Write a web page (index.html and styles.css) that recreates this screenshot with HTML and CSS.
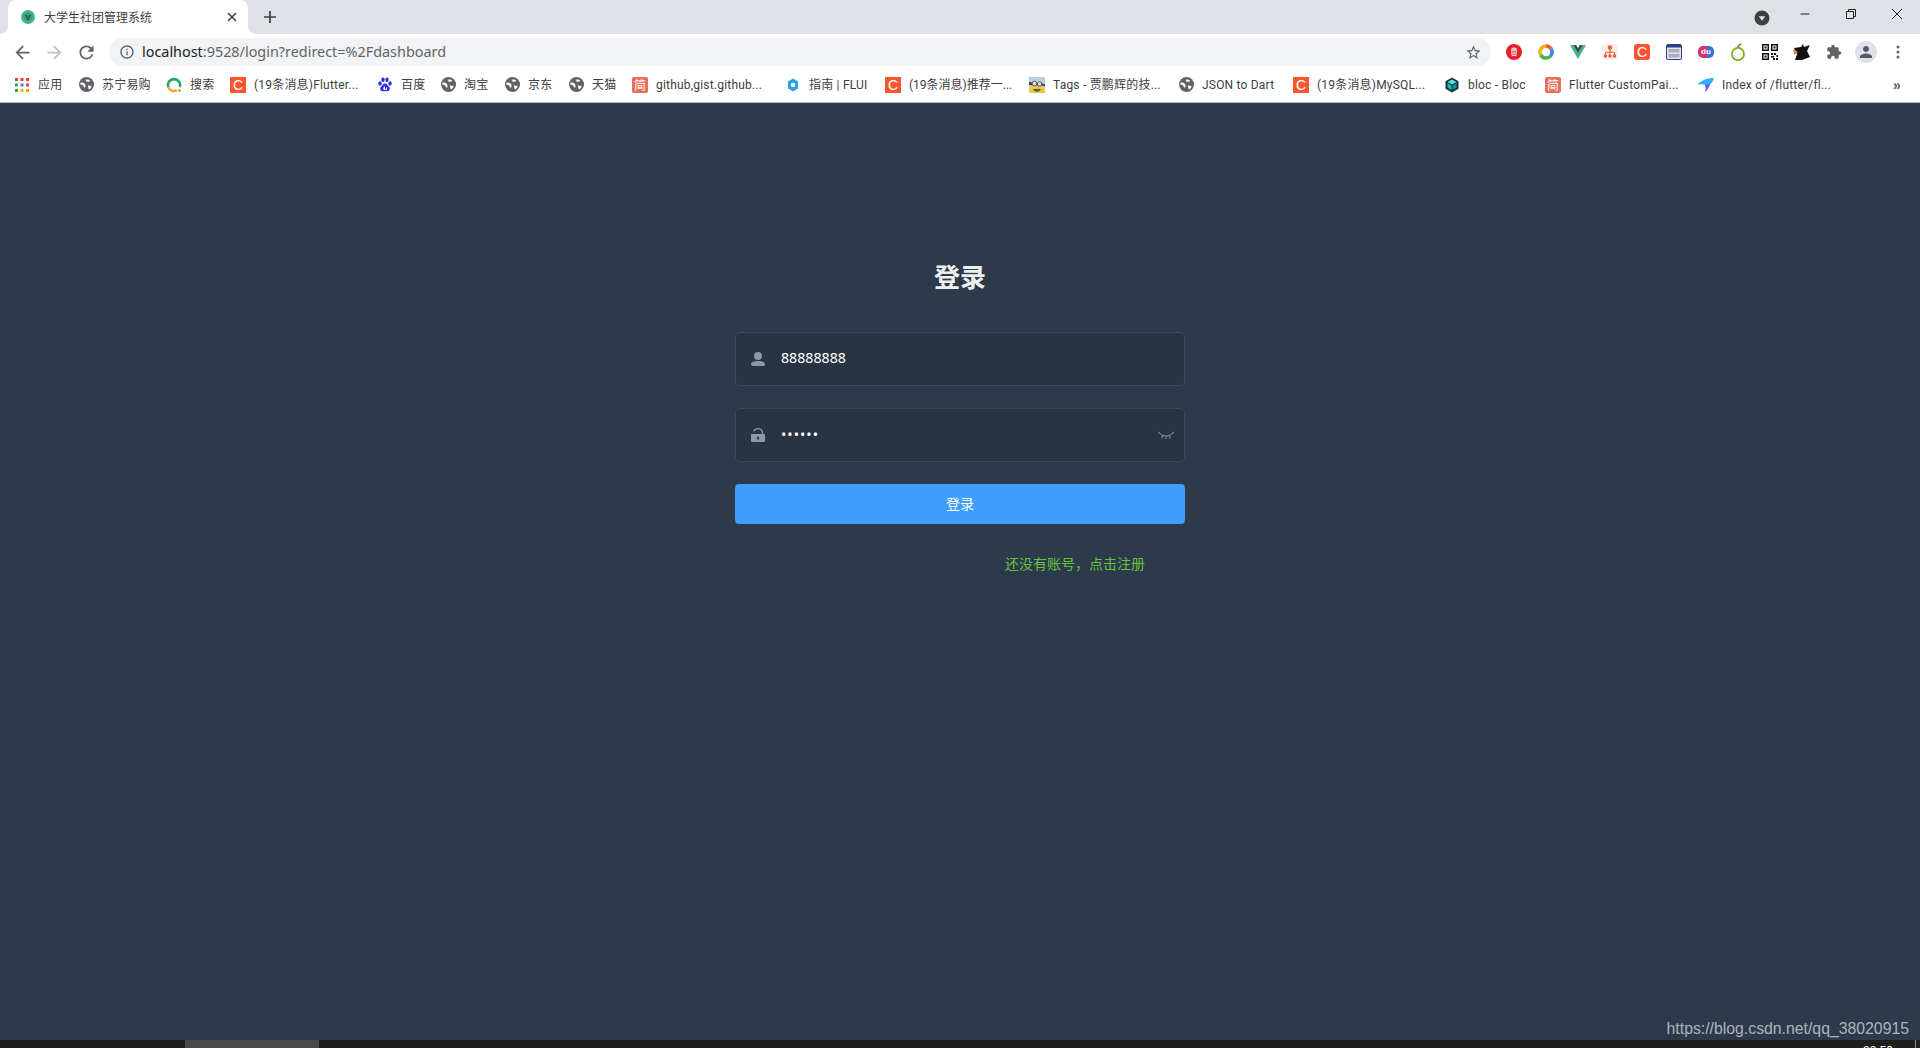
FILE: index.html
```html
<!DOCTYPE html>
<html lang="zh-CN">
<head>
<meta charset="utf-8">
<title>大学生社团管理系统</title>
<link rel="stylesheet" href="styles.css">
</head>
<body>
<svg class="defs" width="0" height="0" aria-hidden="true">
  <symbol id="globe" viewBox="0 0 16 16"><circle cx="8" cy="8" r="8" fill="#5f6368"/><path fill="#fff" d="M1.800 6.200c1.700-.6 3.300.1 4.400 1.300.8.900 1 2 .5 3.100-.3.700-.9 1-1.300.6-.5-.6-.4-1.500-1-2.100-.9-.8-2.200-.9-3-1.100-.2-.7 0-1.300.4-1.800zM7.500 2.700c1.600-.3 3.200.1 4.300 1-.2 1-1.200 1.500-2.200 1.500-1.100 0-2-.5-2.400-1.400-.1-.4 0-.8.300-1.100zM9.500 9.300c1.400-.5 3 0 4 .8-.5 1.600-1.700 2.600-3 3.100-.5-1-.9-2.500-1-3.900z"/></symbol>
</svg>

<header class="tabstrip">
  <div class="tab">
    <svg class="favicon" width="16" height="16" viewBox="0 0 16 16"><circle cx="8" cy="8" r="7" fill="#42b98a"/><circle cx="8" cy="8" r="4.600" fill="#3f9c83"/><text x="8" y="11" text-anchor="middle" class="favicon-v">V</text></svg>
    <span class="tab-title">大学生社团管理系统</span>
    <svg class="tab-close" width="16" height="16" viewBox="0 0 16 16"><path d="M4 4l8 8M12 4l-8 8" stroke="#3c4043" stroke-width="1.600" fill="none"/></svg>
  </div>
  <div class="newtab"><svg width="14" height="14" viewBox="0 0 14 14"><path d="M7 1v12M1 7h12" stroke="#3c4043" stroke-width="1.700" fill="none"/></svg></div>
  <div class="strip-space"></div>
  <div class="tabsearch"><svg width="16" height="16" viewBox="0 0 16 16"><circle cx="8" cy="8" r="7.500" fill="#3c4043"/><path d="M4.600 6.200h6.800L8 10.800z" fill="#dee1e6"/></svg></div>
  <div class="winbtn"><svg width="12" height="12" viewBox="0 0 12 12"><path d="M1.500 6h9" stroke="#202124" stroke-width="1" fill="none"/></svg></div>
  <div class="winbtn"><svg width="12" height="12" viewBox="0 0 12 12"><path d="M1.500 3.500h7v7h-7zM3.500 3.500v-2h7v7h-2" stroke="#202124" stroke-width="1" fill="none"/></svg></div>
  <div class="winbtn"><svg width="12" height="12" viewBox="0 0 12 12"><path d="M1 1l10 10M11 1L1 11" stroke="#202124" stroke-width="1" fill="none"/></svg></div>
</header>

<nav class="toolbar">
  <div class="navbtn"><svg width="21" height="21" viewBox="0 0 24 24" fill="#5f6368"><path d="M20 11H7.830l5.590-5.590L12 4l-8 8 8 8 1.410-1.410L7.830 13H20v-2z"/></svg></div>
  <div class="navbtn"><svg class="mirror" width="21" height="21" viewBox="0 0 24 24" fill="#bdc1c6"><path d="M20 11H7.830l5.590-5.590L12 4l-8 8 8 8 1.410-1.410L7.830 13H20v-2z"/></svg></div>
  <div class="navbtn"><svg width="21" height="21" viewBox="0 0 24 24" fill="#5f6368"><path d="M17.650 6.350A7.958 7.958 0 0 0 12 4c-4.420 0-7.990 3.580-7.990 8s3.570 8 7.990 8c3.730 0 6.840-2.550 7.730-6h-2.080A5.990 5.990 0 0 1 12 18c-3.310 0-6-2.690-6-6s2.690-6 6-6c1.660 0 3.140.69 4.220 1.780L13 11h7V4l-2.350 2.350z"/></svg></div>
  <div class="omnibox">
    <svg class="info" width="16" height="16" viewBox="0 0 24 24" fill="#5f6368"><path d="M11 7h2v2h-2zm0 4h2v6h-2zm1-9C6.480 2 2 6.480 2 12s4.480 10 10 10 10-4.480 10-10S17.520 2 12 2zm0 18c-4.410 0-8-3.590-8-8s3.590-8 8-8 8 3.590 8 8-3.590 8-8 8z"/></svg>
    <span class="url"><span class="url-host">localhost</span>:9528/login?redirect=%2Fdashboard</span>
    <svg class="star" width="17" height="17" viewBox="0 0 24 24" fill="#5f6368"><path d="M22 9.240l-7.190-.62L12 2 9.190 8.630 2 9.240l5.460 4.730L5.820 21 12 17.270 18.180 21l-1.630-7.030L22 9.240zM12 15.400l-3.760 2.270 1-4.280-3.320-2.880 4.380-.38L12 6.100l1.710 4.040 4.380.38-3.320 2.880 1 4.280L12 15.400z"/></svg>
  </div>
  <div class="extensions">
    <div class="ext"><svg width="16" height="16" viewBox="0 0 16 16"><circle cx="8" cy="8" r="8" fill="#e5202b"/><path d="M5 5.200h6M6.800 5V4h2.400v1M5.700 6.200h4.600l-.4 5.400H6.100zM7.200 7.500v3M8.800 7.500v3" stroke="#fff" stroke-width=".9" fill="none"/></svg></div>
    <div class="ext"><svg width="16" height="16" viewBox="0 0 16 16" fill="none" stroke-width="3.600"><path d="M2.800 11A6 6 0 0 1 8 2" stroke="#f5b428"/><path d="M8 2a6 6 0 0 1 5.200 3" stroke="#ea5a3a"/><path d="M13.200 5a6 6 0 0 1-.9 7.200" stroke="#4285f4"/><path d="M12.300 12.200A6 6 0 0 1 2.800 11" stroke="#4caf50"/></svg></div>
    <div class="ext"><svg width="16" height="14" viewBox="0 0 16 14"><path d="M0 0h3.200L8 8.200 12.800 0H16L8 14z" fill="#41b883"/><path d="M3.200 0h3L8 3.200 9.800 0h3L8 8.200z" fill="#35495e"/></svg></div>
    <div class="ext"><svg width="16" height="16" viewBox="0 0 16 16"><rect width="16" height="16" rx="2" fill="#f6efec"/><path d="M8 5v3M3.500 11V8.300h9V11M8 8v3" stroke="#ef5b33" stroke-width="1" fill="none"/><circle cx="8" cy="3.500" r="2.200" fill="#ef5b33"/><circle cx="3.500" cy="12" r="1.700" fill="#ef5b33"/><circle cx="8" cy="12" r="1.700" fill="#ef5b33"/><circle cx="12.500" cy="12" r="1.700" fill="#ef5b33"/></svg></div>
    <div class="ext"><span class="csdn csdn-ext">C</span></div>
    <div class="ext"><svg width="16" height="16" viewBox="0 0 16 16"><rect x=".5" y=".5" width="15" height="15" rx="1.500" fill="#dfe3ea" stroke="#2c3e8f"/><rect x="1" y="1" width="14" height="2.500" fill="#2c3e8f"/><rect x="2.500" y="5" width="11" height="3.500" fill="#a9adb5"/><rect x="2.500" y="10" width="11" height="3.500" fill="#a9adb5"/></svg></div>
    <div class="ext"><span class="du">du</span></div>
    <div class="ext"><svg width="16" height="18" viewBox="0 0 16 18" fill="none"><ellipse cx="8" cy="11" rx="6" ry="6.200" stroke="#7cb518" stroke-width="1.800"/><path d="M8 5c0-2 1.500-3.500 3.500-4" stroke="#5d8f12" stroke-width="1.500"/></svg></div>
    <div class="ext"><svg width="16" height="16" viewBox="0 0 16 16" fill="#111"><path fill-rule="evenodd" d="M0 0h7v7H0zM1.500 1.500v4h4v-4zM9 0h7v7H9zM10.500 1.500v4h4v-4zM0 9h7v7H0zM1.500 10.500v4h4v-4z"/><path d="M2.500 2.500h2v2h-2zM11.500 2.500h2v2h-2zM2.500 11.500h2v2h-2zM9 9h2v2H9zM12 9h2v2h-2zM14.500 11h1.500v2h-1.500zM9 12h3v1.500H9zM11 14h2v2h-2zM14 14h2v2h-2z"/></svg></div>
    <div class="ext"><svg width="18" height="18" viewBox="0 0 18 18"><path d="M1 5l7-1 2-3 1 3 6-2-3 6 3 6-8 3H2l2-6z" fill="#111"/><path d="M0 6l5 3-4 3z" fill="#e8862e"/></svg></div>
    <div class="ext"><svg width="16" height="16" viewBox="0 0 24 24" fill="#5f6368"><path d="M20.500 11H19V7c0-1.100-.9-2-2-2h-4V3.500C13 2.120 11.880 1 10.500 1S8 2.120 8 3.500V5H4c-1.100 0-1.990.9-1.990 2v3.800H3.500c1.490 0 2.700 1.210 2.700 2.700s-1.210 2.700-2.700 2.700H2V20c0 1.100.9 2 2 2h3.800v-1.500c0-1.490 1.210-2.700 2.700-2.700 1.490 0 2.700 1.210 2.700 2.700V22H17c1.100 0 2-.9 2-2v-4h1.500c1.380 0 2.500-1.120 2.500-2.500S21.880 11 20.500 11z"/></svg></div>
    <div class="ext"><span class="avatar"><svg width="18" height="18" viewBox="0 0 24 24" fill="#4f5b6b"><path d="M12 12c2.210 0 4-1.790 4-4s-1.790-4-4-4-4 1.790-4 4 1.790 4 4 4zm0 2c-2.670 0-8 1.340-8 4v2h16v-2c0-2.660-5.330-4-8-4z"/></svg></span></div>
    <div class="ext"><svg width="4" height="14" viewBox="0 0 4 14" fill="#5f6368"><circle cx="2" cy="2" r="1.500"/><circle cx="2" cy="7" r="1.500"/><circle cx="2" cy="12" r="1.500"/></svg></div>
  </div>
</nav>

<nav class="bookmarks">
  <a class="bm"><svg class="bm-icon apps" viewBox="0 0 14 14"><g fill="#ea4335"><rect width="3" height="3"/><rect x="5.500" width="3" height="3"/><rect x="11" width="3" height="3"/><rect x="11" y="5.500" width="3" height="3"/></g><rect y="5.500" width="3" height="3" fill="#34a853"/><rect x="5.500" y="5.500" width="3" height="3" fill="#4285f4"/><rect y="11" width="3" height="3" fill="#34a853"/><rect x="5.500" y="11" width="3" height="3" fill="#fbbc05"/><rect x="11" y="11" width="3" height="3" fill="#f59a23"/></svg><span class="bm-text w25">应用</span></a>
  <a class="bm"><svg class="bm-icon globe"><use href="#globe"/></svg><span class="bm-text w48">苏宁易购</span></a>
  <a class="bm"><svg class="bm-icon" width="16" height="16" viewBox="0 0 16 16" fill="none"><path d="M2.300 10A6 6 0 1 1 13.700 10" stroke="#1dab5f" stroke-width="2.600"/><path d="M2.300 10A6 6 0 0 0 11 13.200" stroke="#f5a73b" stroke-width="2.600"/><circle cx="13.500" cy="13.500" r="1.500" fill="#f59a23"/></svg><span class="bm-text w24">搜索</span></a>
  <a class="bm"><span class="bm-icon csdn">C</span><span class="bm-text w107">(19条消息)Flutter...</span></a>
  <a class="bm"><svg class="bm-icon" width="16" height="16" viewBox="0 0 16 16" fill="#2932e1"><ellipse cx="3" cy="6.500" rx="1.700" ry="2.200"/><ellipse cx="6" cy="2.700" rx="1.700" ry="2.200"/><ellipse cx="10" cy="2.700" rx="1.700" ry="2.200"/><ellipse cx="13" cy="6.500" rx="1.700" ry="2.200"/><path fill-rule="evenodd" d="M8 6.500c2 0 2.500 2 4 3.200 1.500 1.500.7 4.300-1.500 4.500-1 .1-1.800-.3-2.500-.3s-1.500.4-2.500.3c-2.200-.2-3-3-1.500-4.500C5.500 8.500 6 6.500 8 6.500zM6.300 10.500v1.500c0 .8.600 1 1 1h1.700c.5 0 1-.2 1-1v-1.500h-1v1.800H8V9.500H7v1z"/></svg><span class="bm-text w24">百度</span></a>
  <a class="bm"><svg class="bm-icon globe"><use href="#globe"/></svg><span class="bm-text w25">淘宝</span></a>
  <a class="bm"><svg class="bm-icon globe"><use href="#globe"/></svg><span class="bm-text w25">京东</span></a>
  <a class="bm"><svg class="bm-icon globe"><use href="#globe"/></svg><span class="bm-text w24">天猫</span></a>
  <a class="bm"><span class="bm-icon jian">简</span><span class="bm-text w113">github,gist.github...</span></a>
  <a class="bm"><svg class="bm-icon" width="16" height="16" viewBox="0 0 16 16"><path d="M8 1.500l5 3v7l-5 3-5-3v-7z" fill="#2f9fe8"/><circle cx="8" cy="8" r="2.300" fill="#fff"/></svg><span class="bm-text w60">指南 | FLUI</span></a>
  <a class="bm"><span class="bm-icon csdn">C</span><span class="bm-text w104 tight">(19条消息)推荐一...</span></a>
  <a class="bm"><svg class="bm-icon" width="16" height="16" viewBox="0 0 16 16"><rect width="16" height="16" fill="#b9cfe4"/><path d="M0 16c0-6 3-10 8-10s8 4 8 10z" fill="#efc93d"/><path d="M0 5l16 2v2L0 8z" fill="#444"/><circle cx="5.500" cy="6.500" r="2.300" fill="#ddd" stroke="#444" stroke-width=".8"/><circle cx="10.500" cy="7" r="2.300" fill="#ddd" stroke="#444" stroke-width=".8"/><path d="M4 12h8l-2 2.500H6z" fill="#555"/></svg><span class="bm-text w110">Tags - 贾鹏辉的技...</span></a>
  <a class="bm"><svg class="bm-icon globe"><use href="#globe"/></svg><span class="bm-text w75">JSON to Dart</span></a>
  <a class="bm"><span class="bm-icon csdn">C</span><span class="bm-text w111">(19条消息)MySQL...</span></a>
  <a class="bm"><svg class="bm-icon" width="16" height="16" viewBox="0 0 16 16"><path d="M8 .5l6.500 3.700v7.600L8 15.500l-6.500-3.700V4.200z" fill="#12343b"/><path d="M8 2.500l4.500 2.500L8 7.500 3.500 5z" fill="#5fe0dc"/><path d="M3.500 6L7.500 8.500v4.500l-4-2.300z" fill="#1fb7b2"/><path d="M12.500 6L8.500 8.500v4.500l4-2.300z" fill="#0f8f96"/></svg><span class="bm-text w61">bloc - Bloc</span></a>
  <a class="bm"><span class="bm-icon jian">简</span><span class="bm-text w113">Flutter CustomPai...</span></a>
  <a class="bm"><svg class="bm-icon" width="16" height="16" viewBox="0 0 16 16"><path d="M0 7C4 3 10 1 16 1c-1 3-2 5-4 6.500-1 3-2.500 5-5 7.500 1-3 1-5 0-7-2-1-4.500-1-7-.5z" fill="#29b6f6"/><path d="M7 8c2-1 4-1 5-.5-1 3-2.500 5-5 7.500 1-3 1-5 0-7z" fill="#7c4dff"/></svg><span class="bm-text w113">Index of /flutter/fl...</span></a>
  <span class="bm-more">»</span>
</nav>

<main class="page">
  <form class="login-form">
    <h1 class="login-title">登录</h1>
    <div class="field">
      <svg class="field-icon" width="14" height="14" viewBox="0 0 14 14" fill="#889aa4"><circle cx="7" cy="4" r="4"/><path d="M7 9c-4 0-7 1.200-7 3.200C0 13.500 1 14 2 14h10c1 0 2-.5 2-1.800C14 10.200 11 9 7 9z"/></svg>
      <input class="field-input" type="text" value="88888888">
    </div>
    <div class="field">
      <svg class="field-icon" width="14" height="14" viewBox="0 0 14 14" fill="#889aa4"><path fill-rule="evenodd" d="M1 6h9.700V4.500c0-2-1.600-3.200-3.700-3.200-1.700 0-3 .9-3.500 2.300L2.200 3.200C2.900 1.200 4.700 0 7 0c2.900 0 5 1.800 5 4.500V6h1c.6 0 1 .4 1 1v6c0 .6-.4 1-1 1H1c-.6 0-1-.4-1-1V7c0-.6.4-1 1-1zM7 8.500a1.300 1.300 0 0 0-.6 2.400V12h1.200v-1.100A1.300 1.300 0 0 0 7 8.500z"/></svg>
      <input class="field-input secret" type="password" value="123456">
      <svg class="eye" width="16" height="9" viewBox="0 0 16 9" fill="none" stroke="#889aa4" stroke-width="1"><path d="M1 1.500C3 4 5.500 5 8 5s5-1 7-3.500M0 .5l2 2.500M16 .5l-2 2.500M4.500 4.500L4 7.500M11.500 4.500l.5 3M8 5v3"/></svg>
    </div>
    <button class="login-btn" type="button">登录</button>
    <div class="register"><a class="register-link">还没有账号，点击注册</a></div>
  </form>
  <span class="watermark">https://blog.csdn.net/qq_38020915</span>
</main>

<footer class="taskbar">
  <div class="scroll-thumb"></div>
  <span class="clock">22:50</span>
  <span class="show-desktop"></span>
</footer>
</body>
</html>
```

FILE: styles.css
```css
* { box-sizing: border-box; }
html, body { margin: 0; height: 100%; overflow: hidden; }
body {
  display: flex;
  flex-direction: column;
  height: 1048px;
  font-family: "Noto Sans", "Noto Sans CJK SC", sans-serif;
  background: #fff;
}
.defs { position: absolute; }

/* tab strip */
.tabstrip {
  display: flex;
  align-items: center;
  height: 34px;
  background: #dee1e6;
  flex: none;
}
.tab {
  position: relative;
  display: flex;
  align-items: center;
  width: 240px;
  height: 34px;
  margin-left: 8px;
  padding-left: 12px;
  background: #fff;
  border-radius: 8px 8px 0 0;
}
.tab::before, .tab::after {
  content: "";
  position: absolute;
  bottom: 0;
  width: 8px;
  height: 8px;
}
.tab::before { left: -8px; background: radial-gradient(circle at 0 0, #dee1e6 7.5px, #fff 8px); }
.tab::after { right: -8px; background: radial-gradient(circle at 100% 0, #dee1e6 7.5px, #fff 8px); }
.favicon { flex: none; }
.favicon-v { font: bold 8px "Liberation Sans", sans-serif; fill: #23404a; }
.tab-title {
  margin-left: 8px;
  font: 12px/16px "Noto Sans CJK SC", sans-serif;
  color: #3c4043;
  white-space: nowrap;
}
.tab-close { margin-left: 72px; }
.newtab { display: flex; justify-content: center; width: 44px; }
.strip-space { flex: 1; }
.tabsearch { display: flex; justify-content: center; width: 32px; margin-right: 4px; padding-top: 1px; }
.winbtn { display: flex; align-items: center; justify-content: center; width: 46px; height: 34px; padding-bottom: 6px; }

/* toolbar */
.toolbar {
  display: flex;
  align-items: center;
  height: 32px;
  padding: 4px 6px 0;
  background: #fff;
  flex: none;
}
.navbtn { display: flex; align-items: center; justify-content: center; width: 32px; height: 28px; }
.mirror { transform: scaleX(-1); }
.omnibox {
  display: flex;
  align-items: center;
  flex: 1;
  height: 28px;
  margin: 0 7px 0 7px;
  padding: 0 9px 0 10px;
  background: #f1f3f4;
  border-radius: 14px;
}
.info { flex: none; margin-right: 7px; }
.url {
  flex: 1;
  font: 14.4px/20px "Noto Sans", sans-serif;
  color: #5f6368;
  white-space: nowrap;
}
.url-host { color: #202124; }
.extensions { display: flex; flex: none; }
.ext { display: flex; align-items: center; justify-content: center; width: 32px; height: 28px; }
.csdn {
  display: flex;
  align-items: center;
  justify-content: center;
  width: 16px;
  height: 16px;
  background: #fc5531;
  color: #fff;
  font: 14px/16px "Liberation Sans", sans-serif;
}
.csdn-ext { border-radius: 3px; }
.du {
  width: 16px;
  height: 12px;
  border-radius: 5px;
  background: linear-gradient(90deg, #d9306f 55%, #3d6fd9 55%);
  color: #fff;
  font: bold 8px/12px "Liberation Sans", sans-serif;
  text-align: center;
}
.avatar {
  display: flex;
  align-items: center;
  justify-content: center;
  width: 22px;
  height: 22px;
  border-radius: 50%;
  background: #dee1e6;
}

/* bookmarks */
.bookmarks {
  display: flex;
  align-items: center;
  gap: 16px;
  height: 37px;
  padding: 1px 0 0 15px;
  background: #fff;
  border-bottom: 1px solid #b9bcc2;
  flex: none;
}
.bm { display: flex; align-items: center; flex: none; }
.bm-icon { flex: none; width: 16px; height: 16px; margin-right: 8px; }
.bm-icon.globe { width: 15px; height: 15px; }
.bm-icon.apps { width: 14px; height: 14px; margin-right: 9px; }
.jian {
  display: flex;
  align-items: center;
  justify-content: center;
  background: #ea6f5a;
  color: #fff;
  border-radius: 2px;
  font: 12px/16px "Noto Sans CJK SC", sans-serif;
}
.bm-text {
  display: block;
  overflow: hidden;
  font: 12px/16px "Roboto", "Noto Sans CJK SC", sans-serif;
  letter-spacing: .2px;
  color: #3c4043;
  white-space: nowrap;
}
.tight { letter-spacing: 0; }
.w24 { width: 24px; }
.w25 { width: 25px; }
.w48 { width: 48px; }
.w60 { width: 60px; }
.w61 { width: 61px; }
.w75 { width: 75px; }
.w104 { width: 104px; }
.w107 { width: 107px; }
.w110 { width: 110px; }
.w111 { width: 111px; }
.w113 { width: 113px; }
.bm-more {
  margin-left: auto;
  width: 27px;
  font: bold 14px/16px "Liberation Sans", sans-serif;
  color: #5f6368;
}

/* login page */
.page {
  position: relative;
  flex: 1;
  background: #2d3a4b;
  overflow: hidden;
}
.login-form {
  width: 520px;
  margin: 0 auto;
  padding: 160px 35px 0;
}
.login-title {
  margin: 0 0 44px;
  font: bold 26px/25px "Noto Sans CJK SC", sans-serif;
  color: #eee;
  text-align: center;
}
.field {
  display: flex;
  align-items: center;
  height: 54px;
  margin-bottom: 22px;
  padding-left: 15px;
  background: rgba(0, 0, 0, .1);
  border: 1px solid rgba(255, 255, 255, .1);
  border-radius: 5px;
}
.field-icon { flex: none; }
.field-input {
  flex: 1;
  min-width: 0;
  height: 47px;
  margin: 0 0 4px 16px;
  padding: 0;
  background: transparent;
  border: 0;
  outline: 0;
  color: #fff;
  font: 14.2px "Noto Sans", sans-serif;
}
.secret { letter-spacing: 1px; margin-bottom: 2px; }
.eye { flex: none; margin-right: 10px; }
.login-btn {
  display: block;
  width: 100%;
  height: 40px;
  margin: 0 0 30px;
  padding: 0 0 2px;
  background: #409eff;
  border: 0;
  border-radius: 4px;
  color: #fff;
  font: 14px "Noto Sans CJK SC", sans-serif;
}
.register {
  padding: 0 40px 2px 0;
  text-align: right;
  font: 14px/18px "Noto Sans CJK SC", sans-serif;
}
.register-link { color: #67c23a; }
.watermark {
  position: absolute;
  right: 11px;
  bottom: 1px;
  font: 15.8px/20px "Liberation Sans", sans-serif;
  color: rgba(255, 255, 255, .62);
}

/* desktop taskbar, clipped by the window edge */
.taskbar {
  position: relative;
  display: flex;
  height: 8px;
  padding-left: 185px;
  background: #1f1f1f;
  overflow: hidden;
  flex: none;
}
.scroll-thumb { width: 134px; height: 8px; background: #4a4a4a; }
.clock {
  position: absolute;
  left: 1863px;
  top: 4px;
  font: 12px/14px "Liberation Sans", sans-serif;
  color: #fff;
}
.show-desktop {
  position: absolute;
  left: 1915px;
  top: 0;
  width: 1px;
  height: 8px;
  background: #8a8a8a;
}
```
